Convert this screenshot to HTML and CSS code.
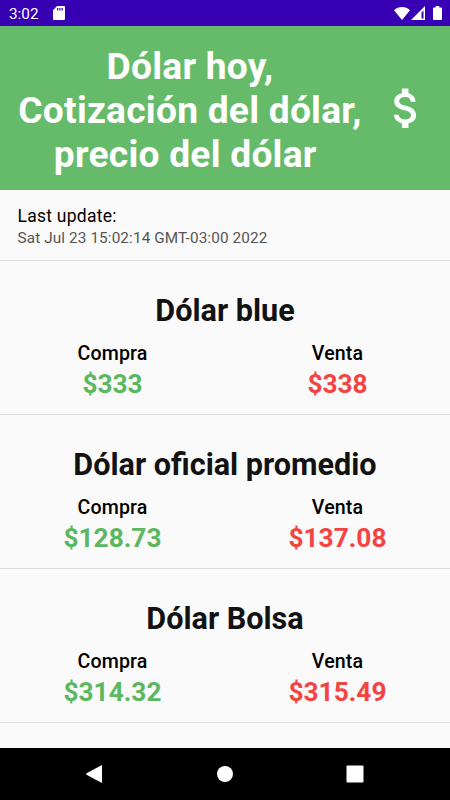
FILE: index.html
```html
<!DOCTYPE html>
<html lang="es">

<head>
  <meta charset="UTF-8">
  <meta name="viewport" content="width=device-width, initial-scale=1.0">
  <link rel="stylesheet" href="styles.css">
  <title>Dólar hoy</title>
</head>

<body>

  <div class="status-bar">
    <span class="time">3:02</span>
    <svg class="sd-icon" viewBox="0 0 12 14"><path fill="#fff" fill-rule="evenodd" d="M4 0h7q1 0 1 1v12q0 1-1 1H1q-1 0-1-1V4.200zM4 2v2.600h1.200V2zM6.300 2v2.600h1.200V2zM8.600 2v2.600h1.200V2z"/></svg>
    <div class="status-icons">
      <svg class="wifi-icon" viewBox="0 0 16 13"><path fill="#fff" d="M8 13L0 3.200C2.300 1 5 0 8 0s5.700 1 8 3.200z"/></svg>
      <svg class="signal-icon" viewBox="0 0 14 14"><path fill="#fff" fill-rule="evenodd" d="M14 0v14H0zM12.500 4.500L10.500 6.500V12.500h2z"/></svg>
      <svg class="battery-icon" viewBox="0 0 9 14"><path fill="#fff" d="M2.700 0h3.600v1.400H8q1 0 1 1V13q0 1-1 1H1q-1 0-1-1V2.400q0-1 1-1h1.700z"/></svg>
    </div>
  </div>

  <header class="header">
    <h1>Dólar hoy, Cotización del dólar, precio del dólar&nbsp;</h1>
    <svg class="money-icon" viewBox="0 0 24 24"><path fill="#fff" d="M11.800 10.900c-2.270-.59-3-1.200-3-2.150 0-1.090 1.010-1.850 2.700-1.850 1.780 0 2.440.85 2.500 2.100h2.210c-.07-1.720-1.120-3.300-3.210-3.810V3h-3v2.160c-1.940.42-3.500 1.680-3.500 3.610 0 2.310 1.910 3.460 4.700 4.130 2.500.6 3 1.480 3 2.410 0 .69-.49 1.790-2.700 1.790-2.060 0-2.870-.92-2.980-2.100h-2.200c.12 2.190 1.760 3.420 3.680 3.830V21h3v-2.150c1.950-.37 3.500-1.500 3.500-3.550 0-2.840-2.430-3.810-4.700-4.400z"/></svg>
  </header>

  <main class="content">
    <div class="update">
      <p class="update-title">Last update:</p>
      <p class="update-date">Sat Jul 23 15:02:14 GMT-03:00 2022</p>
    </div>

    <section class="rate">
      <h2>Dólar blue</h2>
      <div class="prices">
        <div class="price">
          <p class="label">Compra</p>
          <p class="buy">$333</p>
        </div>
        <div class="price">
          <p class="label">Venta</p>
          <p class="sell">$338</p>
        </div>
      </div>
    </section>

    <section class="rate">
      <h2>Dólar oficial promedio</h2>
      <div class="prices">
        <div class="price">
          <p class="label">Compra</p>
          <p class="buy">$128.73</p>
        </div>
        <div class="price">
          <p class="label">Venta</p>
          <p class="sell">$137.08</p>
        </div>
      </div>
    </section>

    <section class="rate">
      <h2>Dólar Bolsa</h2>
      <div class="prices">
        <div class="price">
          <p class="label">Compra</p>
          <p class="buy">$314.32</p>
        </div>
        <div class="price">
          <p class="label">Venta</p>
          <p class="sell">$315.49</p>
        </div>
      </div>
    </section>
  </main>

  <nav class="nav-bar">
    <svg viewBox="0 0 18 18"><path fill="#fff" d="M15 0v18L-.5 9.700q-.8-.7 0-1.400z"/></svg>
    <svg viewBox="0 0 18 18"><circle cx="9" cy="9" r="8" fill="#fff"/></svg>
    <svg viewBox="0 0 18 18"><rect x=".5" y=".5" width="17" height="17" rx="1" fill="#fff"/></svg>
  </nav>

</body>

</html>
```

FILE: styles.css
```css
* {
  margin: 0;
  padding: 0;
  box-sizing: border-box;
}

body {
  font-family: Roboto, sans-serif;
  background-color: #fafafa;
  color: #000;
  height: 100vh;
  display: flex;
  flex-direction: column;
  overflow: hidden;
}

svg {
  display: block;
}

.status-bar {
  flex: none;
  display: flex;
  align-items: center;
  height: 26.25px;
  padding: 0 8.5px 0 9px;
  background-color: #3700b3;
  color: #fff;
}

.time {
  width: 44px;
  font-size: 15.3px;
  line-height: 18px;
  padding-top: 2px;
}

.sd-icon {
  width: 12px;
  height: 14px;
}

.status-icons {
  display: flex;
  align-items: center;
  margin-left: auto;
}

.wifi-icon {
  width: 16px;
  height: 13px;
}

.signal-icon {
  width: 14px;
  height: 14px;
  margin-left: 1px;
}

.battery-icon {
  width: 9px;
  height: 14px;
  margin-left: 8px;
}

.header {
  flex: none;
  display: flex;
  align-items: center;
  gap: 17.5px;
  height: 164px;
  padding: 0 17.5px;
  background-color: #66bb6a;
  color: #fff;
}

.header h1 {
  flex: 1;
  padding-top: 5px;
  font-size: 37.2px;
  line-height: 43.7px;
  letter-spacing: 0.23px;
  text-align: center;
}

.money-icon {
  flex: none;
  width: 52.5px;
  height: 52.5px;
}

.content {
  flex: 1;
  overflow: hidden;
}

.update {
  height: 71px;
  padding: 15.5px 17.5px 0;
  border-bottom: 1px solid #dcdcdc;
}

.update-title {
  font-size: 17.5px;
  line-height: 21px;
  letter-spacing: 0.25px;
}

.update-date {
  margin-top: 2.5px;
  font-size: 15.3px;
  line-height: 18px;
  letter-spacing: 0.12px;
  color: #555;
}

.rate {
  height: 153.8px;
  padding-top: 31.8px;
  border-bottom: 1px solid #dcdcdc;
  text-align: center;
}

.rate h2 {
  font-size: 30.6px;
  line-height: 36px;
  color: #121212;
}

.prices {
  display: flex;
  margin-top: 13px;
}

.price {
  flex: 1;
}

.label {
  font-size: 19.6px;
  font-weight: 500;
  line-height: 23px;
  letter-spacing: 0.15px;
}

.buy,
.sell {
  margin-top: 4.2px;
  font-size: 26.25px;
  font-weight: 700;
  line-height: 31px;
}

.buy {
  color: #5cb860;
}

.sell {
  color: #f44343;
}

.nav-bar {
  flex: none;
  display: flex;
  align-items: center;
  justify-content: center;
  gap: 111.5px;
  height: 52.5px;
  background-color: #000;
}

.nav-bar svg {
  width: 18px;
  height: 18px;
  overflow: visible;
}
```
